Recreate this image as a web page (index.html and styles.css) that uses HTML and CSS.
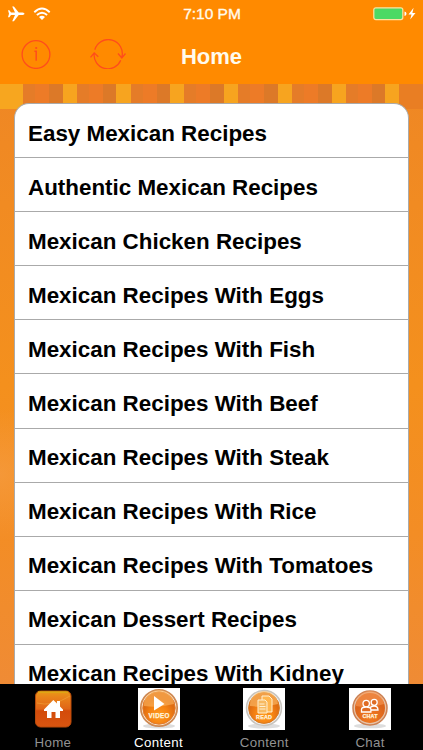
FILE: index.html
```html
<!DOCTYPE html>
<html lang="en">
<head>
<meta charset="utf-8">
<meta name="viewport" content="width=device-width">
<title>Home</title>
<link rel="stylesheet" href="styles.css">
</head>
<body>
<div class="app">
  <header class="header">
    <div class="status">
      <div class="signals">
        <svg width="17" height="16" viewBox="0 0 17 16"><path d="M0 4.2h1.4L3 6.6h4L4.2.4h1.7L10.7 6.6h4q1.8.3 1.8 1.2t-1.8 1.2h-4L5.9 15.2H4.2L7 9H3l-1.6 2.3H0L1 7.8Z" fill="#fff"/></svg>
        <svg width="18" height="14" viewBox="0 0 18 14" fill="none" stroke="#fff" stroke-width="1.9"><path d="M1.3 5.2Q9-2 16.7 5.2M3.9 8Q9 3.4 14.1 8"/><path d="M6 10Q9 7.3 12 10L9 13Z" fill="#fff" stroke="none"/></svg>
      </div>
      <div class="time">7:10 PM</div>
      <div class="power">
        <svg width="43" height="14" viewBox="0 0 43 14"><rect x=".8" y=".8" width="29" height="11.8" rx="2" fill="#4cd964" stroke="#ffe2a0" stroke-width="1.2"/><path d="M31.5 4.5q2 .5 2 2.2t-2 2.2Z" fill="#fff"/><path d="M40.6.8 35.5 7.4h3l-1.3 5.2L42.5 6h-3.1Z" fill="#fff"/></svg>
      </div>
    </div>
    <div class="nav">
      <div class="tools">
        <svg width="30" height="30" viewBox="0 0 30 30"><circle cx="15" cy="15.5" r="13.9" fill="none" stroke="#ff4c1c" stroke-width="1.3"/><path d="M13.4 12.2h1.8v9.6" fill="none" stroke="#ff4c1c" stroke-width="1.5"/><circle cx="15.2" cy="9" r="1.1" fill="#ff4c1c"/></svg>
        <svg width="36" height="30" viewBox="0 0 36 30" fill="none" stroke="#ff4c1c" stroke-width="1.3"><path d="M4.8 10.8A13.8 13.8 0 0 1 31.8 18.4M28 14.5l3.8 4.4 3.7-4.4M30.7 21.2A13.8 13.8 0 0 1 4.2 14.4M.5 18.4l3.7-4.5L8.3 17.8"/></svg>
      </div>
      <h1 class="title">Home</h1>
    </div>
  </header>
  <main class="main">
    <ul class="list">
      <li>Easy Mexican Recipes</li>
      <li>Authentic Mexican Recipes</li>
      <li>Mexican Chicken Recipes</li>
      <li>Mexican Recipes With Eggs</li>
      <li>Mexican Recipes With Fish</li>
      <li>Mexican Recipes With Beef</li>
      <li>Mexican Recipes With Steak</li>
      <li>Mexican Recipes With Rice</li>
      <li>Mexican Recipes With Tomatoes</li>
      <li>Mexican Dessert Recipes</li>
      <li>Mexican Recipes With Kidney</li>
    </ul>
  </main>
  <nav class="tabs">
    <div class="tab">
      <svg width="42" height="42" viewBox="0 0 42 42">
        <defs>
          <linearGradient id="home" x2="0" y2="1"><stop offset="0" stop-color="#e99a16"/><stop offset=".18" stop-color="#e9821a"/><stop offset=".5" stop-color="#e06517"/><stop offset=".55" stop-color="#d34b0b"/><stop offset="1" stop-color="#d95510"/></linearGradient>
          <radialGradient id="ball" cy=".72"><stop offset="0" stop-color="#ff9c20"/><stop offset=".6" stop-color="#f58212"/><stop offset="1" stop-color="#df6d12"/></radialGradient>
          <radialGradient id="chat" cy=".8"><stop offset="0" stop-color="#f57d21"/><stop offset="1" stop-color="#dc651c"/></radialGradient>
        </defs>
        <rect x="3.5" y="3" width="35.5" height="36" rx="5" fill="url(#home)" stroke="#b84a0b"/>
        <path d="M6 4h30" stroke="#d6b714"/><path d="M5 15Q20 19 38 8" stroke="#f2a33a" fill="none" opacity=".6"/>
        <path d="M12 21.5 21.3 12l3.7 3.5V13h3v5.5l3 3V23h-3v7h-4.5v-6h-4v6H15v-7h-3Z" fill="#fff"/>
      </svg>
      <span>Home</span>
    </div>
    <div class="tab active">
      <svg width="42" height="42" viewBox="0 0 42 42"><path fill="#fff" d="M0 0h42v42H0z"/><ellipse cx="21" cy="38" rx="16" ry="2.5" fill="#ddd"/><circle cx="21" cy="20" r="18.2" fill="#f8e4cd" stroke="#ce8953" stroke-width="1.7"/><circle cx="21" cy="20" r="16.2" fill="url(#ball)" stroke="#e17a2c"/><path d="M6 18a15 15 0 0 1 30-2Q21 20 6 18Z" fill="#ffbd68" opacity=".55"/><path d="M16 8v14.5L26.5 16Z" fill="#fff"/><text x="21" y="29.5" class="mark" textLength="21">VIDEO</text></svg>
      <span>Content</span>
    </div>
    <div class="tab">
      <svg width="42" height="42" viewBox="0 0 42 42"><path fill="#fff" d="M0 0h42v42H0z"/><ellipse cx="21" cy="38" rx="16" ry="2.5" fill="#ddd"/><circle cx="21" cy="20" r="17.5" fill="#eee" stroke="#c8c4be" stroke-width="1.5"/><circle cx="21" cy="20" r="15.4" fill="url(#ball)" stroke="#d77b23"/><path d="M7 18a14 14 0 0 1 28-2Q21 20 7 18Z" fill="#ffc16c" opacity=".6"/><path d="M19 8h7l3 3v13H19Z" fill="#ffb54e" stroke="#fff0d2"/><path d="M15 12h7l2 2v11h-9Z" fill="#f7ba63" stroke="#fff0d2"/><path d="M16.5 16h5m-5 2.5h6m-6 2.5h6" stroke="#fff0d2"/><text x="21" y="31" class="mark small" textLength="16">READ</text></svg>
      <span>Content</span>
    </div>
    <div class="tab">
      <svg width="42" height="42" viewBox="0 0 42 42"><path fill="#fff" d="M0 0h42v42H0z"/><ellipse cx="21" cy="38" rx="16" ry="2.3" fill="#ddd"/><circle cx="21" cy="20" r="17" fill="#e6c3a8" stroke="#cc8052" stroke-width="1.5"/><circle cx="21" cy="20" r="15" fill="url(#chat)"/><path d="M7 18a14 14 0 0 1 28-2Q21 21 7 18Z" fill="#f89a55" opacity=".6"/><g fill="#df6c25" stroke="#fff" stroke-width="1.3"><circle cx="25.2" cy="14.3" r="3"/><path d="M21 22v-2q1-2 4-2 4 0 4 4Z"/><circle cx="17.2" cy="15.6" r="3.2"/><path d="M12.5 24v-2.5q0-2.5 4.7-2.5t4.7 2.5V24Z"/></g><text x="21" y="30.2" class="mark small" textLength="15">CHAT</text></svg>
      <span>Chat</span>
    </div>
  </nav>
</div>
</body>
</html>
```

FILE: styles.css
```css
* { box-sizing: border-box; }
body { margin: 0; font-family: "Liberation Sans", Arial, sans-serif; }
svg { display: block; flex: none; }
.app { width: 423px; height: 750px; overflow: hidden; display: flex; flex-direction: column; }
.header { height: 84px; flex: none; background: #ff8a00; color: #fffbed; }
.status { height: 28px; display: grid; grid-template-columns: 1fr auto 1fr; align-items: center; padding: 0 7px 0 8px; }
.signals { display: flex; align-items: center; gap: 8px; }
.power { display: flex; justify-content: flex-end; }
.time { font-size: 15.5px; -webkit-text-stroke: .35px; }
.nav { height: 56px; display: grid; grid-template-columns: 1fr auto 1fr; padding: 0 21px; }
.tools { display: flex; gap: 39px; padding-top: 11px; }
.title { margin: 0; padding-top: 16px; font-size: 22px; line-height: 25px; font-weight: bold; }
.main {
  flex: 1;
  min-height: 0;
  overflow: hidden;
  padding: 19px 14px 0;
  background:
    linear-gradient(#f7a61f, #f7a61f) 0 0 / 23px 25px no-repeat,
    linear-gradient(#e97e23, #e97e23) 399px 0 / 24px 25px no-repeat,
    repeating-linear-gradient(90deg, #e57c28 0 12px, #ed7b27 12px 26px, #dc7928 26px 39.5px, #f7a41f 39.5px 53.8px) 22.5px 0 / 400px 25px no-repeat,
    radial-gradient(ellipse at 0 65%, #f6a04b88 0, transparent 12%),
    linear-gradient(#ef8724, #f18b22 20%, #f4901d 50%, #f38d25 75%, #ef8b35);
}
.list { margin: 0; padding: 0; list-style: none; background: #fff; border: 1.5px solid #aaa; border-bottom: 0; border-radius: 15px 15px 0 0; overflow: hidden; }
.list li { height: 54.1px; padding: 6px 0 0 13px; display: flex; align-items: center; border-bottom: 1.3px solid #aaa; color: #000; font-size: 22.4px; font-weight: bold; white-space: nowrap; }
.tabs { height: 66px; flex: none; display: grid; grid-template-columns: repeat(4, 1fr); background: #000; }
.tab { display: flex; flex-direction: column; align-items: center; padding-top: 4px; color: #929292; font-size: 13.3px; line-height: 15px; }
.tab span { margin-top: 5px; letter-spacing: .35px; }
.active { color: #fff; }
.mark { font: bold 6.3px "Liberation Sans", sans-serif; fill: #fff4df; stroke: #fff4df; stroke-width: .25px; text-anchor: middle; }
.small { font-size: 5.4px; }
```
